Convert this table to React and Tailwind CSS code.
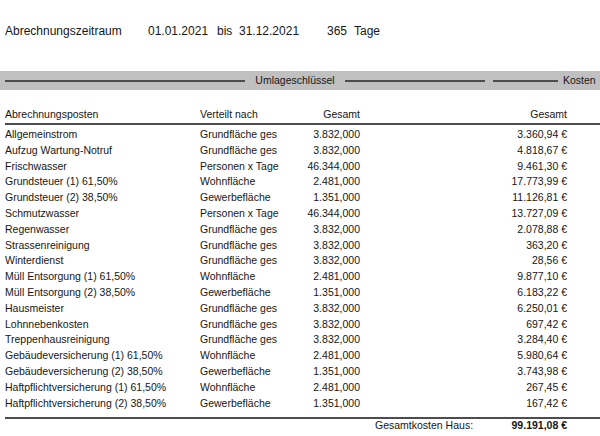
import React from "react";

const rows = [
  ["Allgemeinstrom", "Grundfläche ges", "3.832,000", "3.360,94 €"],
  ["Aufzug Wartung-Notruf", "Grundfläche ges", "3.832,000", "4.818,67 €"],
  ["Frischwasser", "Personen x Tage", "46.344,000", "9.461,30 €"],
  ["Grundsteuer (1) 61,50%", "Wohnfläche", "2.481,000", "17.773,99 €"],
  ["Grundsteuer (2) 38,50%", "Gewerbefläche", "1.351,000", "11.126,81 €"],
  ["Schmutzwasser", "Personen x Tage", "46.344,000", "13.727,09 €"],
  ["Regenwasser", "Grundfläche ges", "3.832,000", "2.078,88 €"],
  ["Strassenreinigung", "Grundfläche ges", "3.832,000", "363,20 €"],
  ["Winterdienst", "Grundfläche ges", "3.832,000", "28,56 €"],
  ["Müll Entsorgung (1) 61,50%", "Wohnfläche", "2.481,000", "9.877,10 €"],
  ["Müll Entsorgung (2) 38,50%", "Gewerbefläche", "1.351,000", "6.183,22 €"],
  ["Hausmeister", "Grundfläche ges", "3.832,000", "6.250,01 €"],
  ["Lohnnebenkosten", "Grundfläche ges", "3.832,000", "697,42 €"],
  ["Treppenhausreinigung", "Grundfläche ges", "3.832,000", "3.284,40 €"],
  ["Gebäudeversicherung (1) 61,50%", "Wohnfläche", "2.481,000", "5.980,64 €"],
  ["Gebäudeversicherung (2) 38,50%", "Gewerbefläche", "1.351,000", "3.743,98 €"],
  ["Haftpflichtversicherung (1) 61,50%", "Wohnfläche", "2.481,000", "267,45 €"],
  ["Haftpflichtversicherung (2) 38,50%", "Gewerbefläche", "1.351,000", "167,42 €"],
];

const Row = ({ cells, className = "" }) => (
  <div
    className={
      "grid grid-cols-[195px_90px_70px_127px_80px_33px] pl-[5px] items-center " +
      className
    }
  >
    <span className="whitespace-nowrap">{cells[0]}</span>
    <span className="whitespace-nowrap">{cells[1]}</span>
    <span className="text-right whitespace-nowrap">{cells[2]}</span>
    <span />
    <span className="text-right whitespace-nowrap">{cells[3]}</span>
    <span />
  </div>
);

export default function App() {
  return (
    <div className="w-[600px] h-[436px] bg-white text-[#161616] overflow-hidden font-['Liberation_Sans',Arial,sans-serif]">
      {/* Zeitraum */}
      <div className="flex items-center pl-[5px] pt-[24px] h-[38px] text-[12px] leading-[14px] whitespace-nowrap">
        <span className="w-[143px]">Abrechnungszeitraum</span>
        <span className="w-[69px]">01.01.2021</span>
        <span className="w-[22px]">bis</span>
        <span className="w-[88px]">31.12.2021</span>
        <span className="w-[27px]">365</span>
        <span>Tage</span>
      </div>

      {/* Umlageschlüssel / Kosten bar */}
      <div className="mt-[33px] h-[19px] bg-[#c0c0c0] flex items-center pl-[5px] text-[10.5px] whitespace-nowrap">
        <div className="w-[240px] h-[2px] bg-[#4d4d4d]" />
        <span className="w-[100px] text-center">Umlageschlüssel</span>
        <div className="w-[140px] h-[2px] bg-[#4d4d4d]" />
        <div className="ml-[8px] w-[65px] h-[2px] bg-[#4d4d4d]" />
        <span className="ml-[5px]">Kosten</span>
      </div>

      {/* Header */}
      <div className="mt-[17px] text-[10.5px] leading-[15px]">
        <Row cells={["Abrechnungsposten", "Verteilt nach", "Gesamt", "Gesamt"]} className="h-[15px]" />
      </div>
      <div className="mt-[1px] ml-[5px] h-[2px] bg-[#4d4d4d]" />

      {/* Rows */}
      <div className="mt-[2px] text-[10.5px] leading-[15.8px]">
        {rows.map((r) => (
          <Row key={r[0]} cells={r} className="h-[15.8px]" />
        ))}
      </div>

      <div className="mt-[6px] ml-[5px] h-[2px] bg-[#4d4d4d]" />

      {/* Total */}
      <div className="flex items-center h-[13px] text-[10.5px] whitespace-nowrap">
        <span className="ml-[375px] w-[95px]">Gesamtkosten Haus:</span>
        <span className="w-[97px] text-right font-bold">99.191,08 €</span>
      </div>
    </div>
  );
}
